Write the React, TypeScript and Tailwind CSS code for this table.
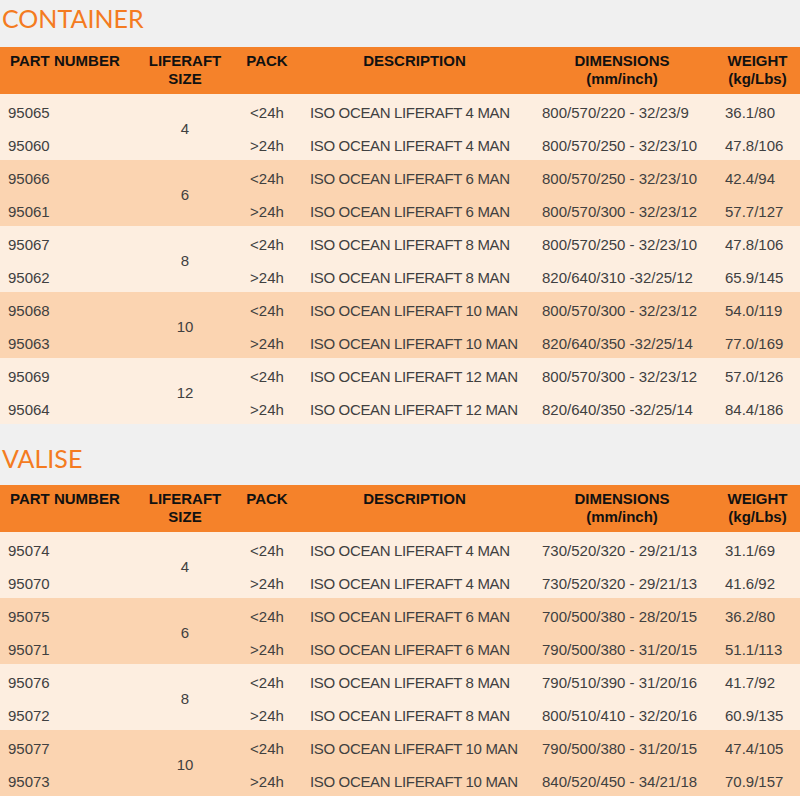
import React from "react";

type Row = { part: string; pack: string; desc: string; dim: string; weight: string };
type Group = { size: string; rows: [Row, Row] };

const container: Group[] = [
  { size: "4", rows: [
    { part: "95065", pack: "<24h", desc: "ISO OCEAN LIFERAFT 4 MAN", dim: "800/570/220 - 32/23/9", weight: "36.1/80" },
    { part: "95060", pack: ">24h", desc: "ISO OCEAN LIFERAFT 4 MAN", dim: "800/570/250 - 32/23/10", weight: "47.8/106" },
  ]},
  { size: "6", rows: [
    { part: "95066", pack: "<24h", desc: "ISO OCEAN LIFERAFT 6 MAN", dim: "800/570/250 - 32/23/10", weight: "42.4/94" },
    { part: "95061", pack: ">24h", desc: "ISO OCEAN LIFERAFT 6 MAN", dim: "800/570/300 - 32/23/12", weight: "57.7/127" },
  ]},
  { size: "8", rows: [
    { part: "95067", pack: "<24h", desc: "ISO OCEAN LIFERAFT 8 MAN", dim: "800/570/250 - 32/23/10", weight: "47.8/106" },
    { part: "95062", pack: ">24h", desc: "ISO OCEAN LIFERAFT 8 MAN", dim: "820/640/310 -32/25/12", weight: "65.9/145" },
  ]},
  { size: "10", rows: [
    { part: "95068", pack: "<24h", desc: "ISO OCEAN LIFERAFT 10 MAN", dim: "800/570/300 - 32/23/12", weight: "54.0/119" },
    { part: "95063", pack: ">24h", desc: "ISO OCEAN LIFERAFT 10 MAN", dim: "820/640/350 -32/25/14", weight: "77.0/169" },
  ]},
  { size: "12", rows: [
    { part: "95069", pack: "<24h", desc: "ISO OCEAN LIFERAFT 12 MAN", dim: "800/570/300 - 32/23/12", weight: "57.0/126" },
    { part: "95064", pack: ">24h", desc: "ISO OCEAN LIFERAFT 12 MAN", dim: "820/640/350 -32/25/14", weight: "84.4/186" },
  ]},
];

const valise: Group[] = [
  { size: "4", rows: [
    { part: "95074", pack: "<24h", desc: "ISO OCEAN LIFERAFT 4 MAN", dim: "730/520/320 - 29/21/13", weight: "31.1/69" },
    { part: "95070", pack: ">24h", desc: "ISO OCEAN LIFERAFT 4 MAN", dim: "730/520/320 - 29/21/13", weight: "41.6/92" },
  ]},
  { size: "6", rows: [
    { part: "95075", pack: "<24h", desc: "ISO OCEAN LIFERAFT 6 MAN", dim: "700/500/380 - 28/20/15", weight: "36.2/80" },
    { part: "95071", pack: ">24h", desc: "ISO OCEAN LIFERAFT 6 MAN", dim: "790/500/380 - 31/20/15", weight: "51.1/113" },
  ]},
  { size: "8", rows: [
    { part: "95076", pack: "<24h", desc: "ISO OCEAN LIFERAFT 8 MAN", dim: "790/510/390 - 31/20/16", weight: "41.7/92" },
    { part: "95072", pack: ">24h", desc: "ISO OCEAN LIFERAFT 8 MAN", dim: "800/510/410 - 32/20/16", weight: "60.9/135" },
  ]},
  { size: "10", rows: [
    { part: "95077", pack: "<24h", desc: "ISO OCEAN LIFERAFT 10 MAN", dim: "790/500/380 - 31/20/15", weight: "47.4/105" },
    { part: "95073", pack: ">24h", desc: "ISO OCEAN LIFERAFT 10 MAN", dim: "840/520/450 - 34/21/18", weight: "70.9/157" },
  ]},
];

const cols = "grid grid-cols-[138px_94px_70px_225px_190px_1fr]";

function Header() {
  return (
    <div className={`${cols} bg-[#f5822a] text-[#111] font-bold text-[15px] leading-[18px] pt-[5px] h-[47px]`}>
      <div className="pl-[10px]">PART NUMBER</div>
      <div className="text-center">LIFERAFT<br />SIZE</div>
      <div className="text-center">PACK</div>
      <div className="text-center">DESCRIPTION</div>
      <div className="text-center">DIMENSIONS<br />(mm/inch)</div>
      <div className="text-center pr-[2px]">WEIGHT<br />(kg/Lbs)</div>
    </div>
  );
}

function GroupRows({ g, dark }: { g: Group; dark: boolean }) {
  const cell = "pt-[5px] flex items-center whitespace-nowrap";
  return (
    <div
      className={`${cols} grid-rows-[33px_33px] h-[66px] text-[15px] text-[#404040] ${dark ? "bg-[#fbd4b1]" : "bg-[#fdeee0]"}`}
    >
      {g.rows.map((r, i) => (
        <React.Fragment key={r.part}>
          <div className={`${cell} pl-[8px]`} style={{ gridRow: i + 1, gridColumn: 1 }}>{r.part}</div>
          {i === 0 && (
            <div className="pt-[5px] flex items-center justify-center" style={{ gridRow: "1 / span 2", gridColumn: 2 }}>{g.size}</div>
          )}
          <div className={`${cell} justify-center`} style={{ gridRow: i + 1, gridColumn: 3 }}>{r.pack}</div>
          <div className={`${cell} pl-[8px] tracking-[-0.35px]`} style={{ gridRow: i + 1, gridColumn: 4 }}>{r.desc}</div>
          <div className={`${cell} pl-[15px]`} style={{ gridRow: i + 1, gridColumn: 5 }}>{r.dim}</div>
          <div className={`${cell} pl-[8px]`} style={{ gridRow: i + 1, gridColumn: 6 }}>{r.weight}</div>
        </React.Fragment>
      ))}
    </div>
  );
}

function Section({ title, groups, first }: { title: string; groups: Group[]; first: boolean }) {
  return (
    <div>
      <div className={`bg-[#f0f0f0] flex items-end pl-[2px] ${first ? "h-[47px] pb-[16px]" : "h-[61px] pb-[14px]"}`}>
        <span className="text-[#f47b20] text-[25px] leading-[25px] font-normal" style={{ fontFamily: "Lato, 'Liberation Sans', sans-serif" }}>
          {title}
        </span>
      </div>
      <Header />
      {groups.map((g, i) => (
        <GroupRows key={g.size} g={g} dark={i % 2 === 1} />
      ))}
    </div>
  );
}

export default function App() {
  return (
    <div className="w-[800px] h-[804px] bg-white overflow-hidden" style={{ fontFamily: "'Liberation Sans', Arial, sans-serif" }}>
      <Section title="CONTAINER" groups={container} first />
      <Section title="VALISE" groups={valise} first={false} />
    </div>
  );
}
